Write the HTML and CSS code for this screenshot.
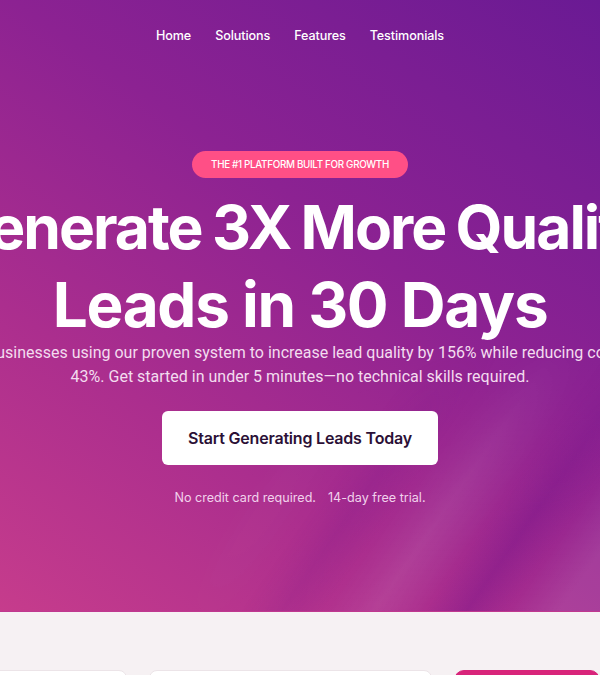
FILE: index.html
```html
<!DOCTYPE html>
<html lang="en">
<head>
<meta charset="utf-8">
<title>Lead Generation</title>
<link rel="stylesheet" href="styles.css">
</head>
<body>
<section class="hero">
  <div class="streaks"></div>
  <nav class="nav">
    <a href="#">Home</a>
    <a href="#">Solutions</a>
    <a href="#">Features</a>
    <a href="#">Testimonials</a>
  </nav>
  <div class="content">
    <span class="badge">THE #1 PLATFORM BUILT FOR GROWTH</span>
    <h1 class="title"><span class="line1">Generate 3X More Quality</span><br>Leads in 30 Days</h1>
    <p class="lead">Join 2,500+ businesses using our proven system to increase lead quality by 156% while reducing cost per lead by<br>43%. Get started in under 5 minutes—no technical skills required.</p>
    <a class="cta" href="#">Start Generating Leads Today</a>
    <p class="note">No credit card required.<span class="sep"></span>14-day free trial.</p>
  </div>
</section>
<section class="below">
  <div class="cards">
    <div class="card c1"></div>
    <div class="card c2"></div>
    <div class="card c3"></div>
  </div>
</section>
</body>
</html>
```
FILE: styles.css
```css
* { box-sizing: border-box; }
html, body { margin: 0; padding: 0; }
body {
  overflow: hidden;
  width: 600px;
  height: 675px;
  font-family: "Inter", "Liberation Sans", sans-serif;
  background: #f6f1f3;
}
.hero {
  position: relative;
  height: 612px;
  overflow: hidden;
  background: linear-gradient(35deg, #c63c8c 0%, #ab2e8e 30%, #8c2292 60%, #6a1a94 100%);
  border-bottom: 1px solid #c0388f;
}
.streaks {
  position: absolute;
  inset: 0;
  background:
    linear-gradient(125deg, transparent 55%, rgba(255,255,255,0.09) 60%, transparent 65%, rgba(110,15,135,0.30) 69%, transparent 73%, rgba(255,255,255,0.10) 78%, transparent 83%, rgba(110,15,135,0.32) 87%, transparent 91%, rgba(255,255,255,0.10) 96%);
  -webkit-mask-image: radial-gradient(ellipse 70% 45% at 100% 100%, #000 40%, transparent 100%);
  mask-image: radial-gradient(ellipse 70% 45% at 100% 100%, #000 40%, transparent 100%);
  pointer-events: none;
}
.nav {
  position: relative;
  display: flex;
  justify-content: center;
  gap: 24px;
  padding-top: 27px;
}
.nav a {
  color: #ffffff;
  text-decoration: none;
  font-size: 12.6px;
  font-weight: 500;
  line-height: 17px;
  letter-spacing: -0.1px;
}
.content {
  position: relative;
  width: 900px;
  margin-left: -150px;
  display: flex;
  flex-direction: column;
  align-items: center;
  text-align: center;
  padding-top: 107px;
}
.badge {
  display: inline-block;
  background: #ff4f86;
  color: #fff;
  font-size: 9.8px;
  font-weight: 500;
  line-height: 27px;
  height: 27px;
  padding: 0 19px;
  border-radius: 14px;
  letter-spacing: -0.3px;
}
.title {
  margin: 10px 0 0;
  color: #ffffff;
  font-size: 62px;
  font-weight: 700;
  line-height: 78px;
  letter-spacing: -1.3px;
  white-space: nowrap;
}
.line1 {
  font-size: 60.5px;
  letter-spacing: -2px;
  word-spacing: -2px;
}
.lead {
  margin: -3px 0 0;
  color: #f3dcef;
  font-family: "Roboto", "Liberation Sans", sans-serif;
  font-size: 16px;
  line-height: 24px;
  white-space: nowrap;
}
.cta {
  margin-top: 22px;
  display: flex;
  align-items: center;
  justify-content: center;
  width: 276px;
  height: 54px;
  background: #ffffff;
  border-radius: 6px;
  color: #2b1036;
  text-decoration: none;
  font-size: 16px;
  font-weight: 600;
  letter-spacing: -0.2px;
}
.note {
  margin: 24px 0 0;
  color: #f1d2ec;
  font-size: 12.6px;
  line-height: 17px;
}
.sep { display: inline-block; width: 12px; }
.below {
  height: 63px;
  position: relative;
}
.cards {
  position: relative;
  top: 58px;
  display: flex;
  gap: 22px;
}
.card {
  height: 40px;
  background: #ffffff;
  border: 1px solid #ece4e8;
  border-radius: 8px;
}
.c1 { width: 138px; margin-left: -8px; }
.c2 { width: 290px; }
.c3 { width: 150px; background: #d8247a; border-color: #d8247a; border-radius: 10px; }
```
